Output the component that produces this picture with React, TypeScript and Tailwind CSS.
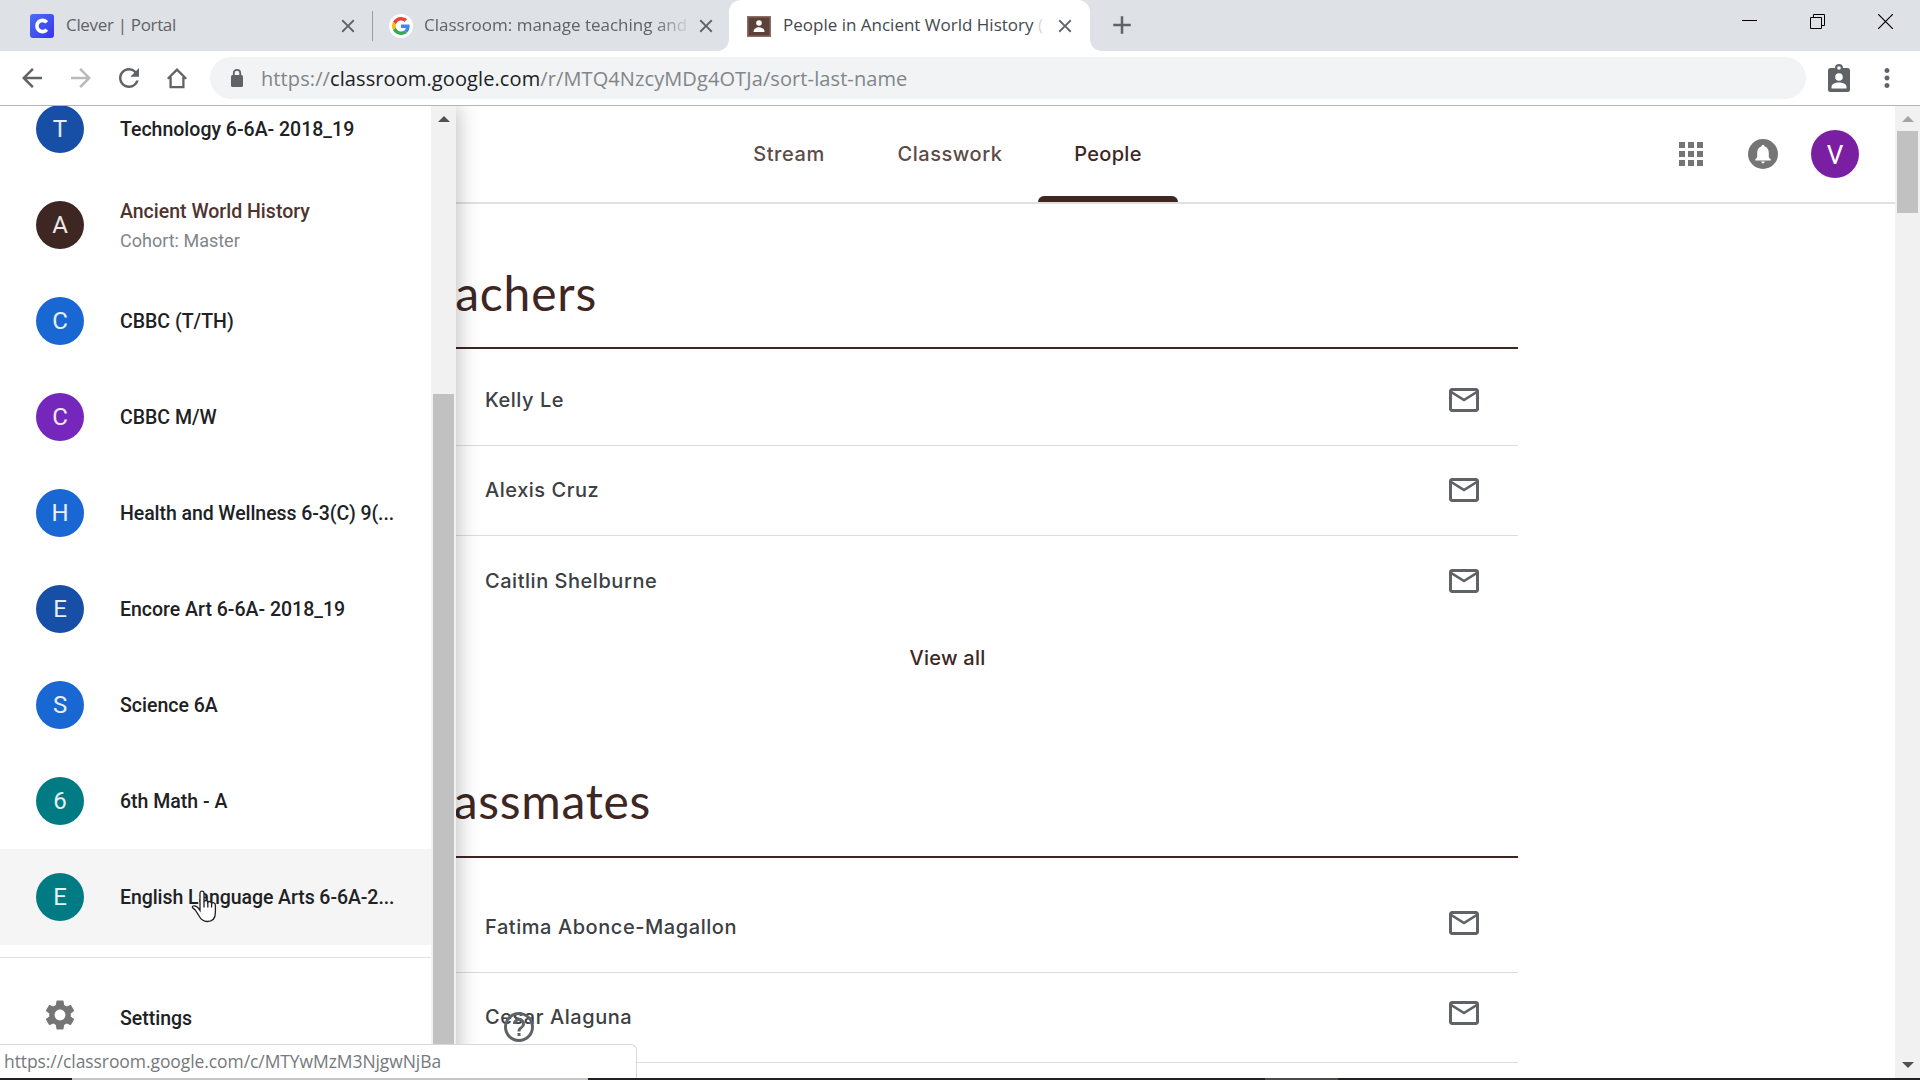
import { MdApps, MdArrowBack, MdArrowForward, MdClose, MdAdd, MdHelpOutline, MdMailOutline, MdMoreVert, MdRefresh, MdSettings } from "react-icons/md";

const courses = [
  { letter: "T", color: "bg-[#174ea6]", name: "Technology 6-6A- 2018_19" },
  { letter: "A", color: "bg-[#3e2723]", name: "Ancient World History", section: "Cohort: Master" },
  { letter: "C", color: "bg-[#1967d2]", name: "CBBC (T/TH)" },
  { letter: "C", color: "bg-[#7627bb]", name: "CBBC M/W" },
  { letter: "H", color: "bg-[#1967d2]", name: "Health and Wellness 6-3(C) 9(...", long: true },
  { letter: "E", color: "bg-[#174ea6]", name: "Encore Art 6-6A- 2018_19" },
  { letter: "S", color: "bg-[#1967d2]", name: "Science 6A" },
  { letter: "6", color: "bg-[#007b83]", name: "6th Math - A" },
  { letter: "E", color: "bg-[#007b83]", name: "English Language Arts 6-6A-2...", hovered: true, long: true },
];

const teachers = ["Kelly Le", "Alexis Cruz", "Caitlin Shelburne"];
const classmates = ["Fatima Abonce-Magallon", "Cesar Alaguna"];

function Flare({ flip = false }: { flip?: boolean }) {
  return (
    <svg className={flip ? "w-3 h-3 self-end -scale-x-100" : "w-3 h-3 self-end"} viewBox="0 0 12 12">
      <path d="M12 0v12H0C7 12 12 7 12 0z" fill="#fff" />
    </svg>
  );
}

function TabStrip() {
  return (
    <div className="flex h-[51px] shrink-0 bg-[#dee1e6] font-['Open_Sans',sans-serif] text-[17px] text-[#5f6368]">
      <div className="flex w-[372px] items-center pl-[30px] pr-[13px]">
        <div className="flex h-6 w-6 shrink-0 items-center justify-center rounded-[3px] bg-gradient-to-br from-[#4a6cf8] to-[#3d31ea]">
          <svg className="h-6 w-6" viewBox="0 0 24 24" fill="none" stroke="#fff" strokeWidth="3.6">
            <path d="M16.8 8.400A5.600 5.600 0 1 0 16.800 15.600" />
          </svg>
        </div>
        <span className="ml-[12px] grow whitespace-nowrap pb-[2px] tracking-[-0.33px]">Clever | Portal</span>
        <MdClose className="h-[22px] w-[22px]" />
      </div>
      <div className="my-auto h-[30px] w-px bg-[#9b9fa4]" />
      <div className="flex w-[344px] items-center pl-4 pr-0">
        <div className="flex h-6 w-6 shrink-0 items-center justify-center rounded-full bg-white">
          <svg className="h-[18px] w-[18px]" viewBox="0 0 48 48">
            <path fill="#EA4335" d="M24 9.5c3.54 0 6.71 1.22 9.21 3.6l6.85-6.85C35.9 2.38 30.47 0 24 0 14.62 0 6.51 5.38 2.56 13.22l7.98 6.19C12.43 13.72 17.74 9.5 24 9.5z" />
            <path fill="#4285F4" d="M46.98 24.55c0-1.57-.15-3.09-.38-4.55H24v9.02h12.94c-.58 2.96-2.26 5.48-4.78 7.18l7.73 6c4.51-4.18 7.09-10.36 7.09-17.65z" />
            <path fill="#FBBC05" d="M10.53 28.59c-.48-1.45-.76-2.99-.76-4.59s.27-3.14.76-4.59l-7.98-6.19C.92 16.46 0 20.12 0 24c0 3.88.92 7.54 2.56 10.78l7.97-6.19z" />
            <path fill="#34A853" d="M24 48c6.48 0 11.93-2.13 15.89-5.81l-7.73-6c-2.15 1.45-4.92 2.3-8.16 2.3-6.26 0-11.57-4.22-13.47-9.91l-7.98 6.19C6.51 42.62 14.62 48 24 48z" />
          </svg>
        </div>
        <span className="ml-[11px] w-[271px] shrink-0 overflow-hidden whitespace-nowrap pb-[2px] [mask-image:linear-gradient(90deg,#000_230px,transparent_268px)]">
          Classroom: manage teaching and
        </span>
        <MdClose className="h-[22px] w-[22px] shrink-0" />
      </div>
      <Flare />
      <div className="flex w-[361px] items-center rounded-t-[12px] bg-white pl-[18px] pr-[14px] text-[#45494d]">
        <svg className="h-6 w-6 shrink-0" viewBox="0 0 24 24">
          <rect y="2" width="24" height="21" fill="#8d6e63" />
          <rect x="1.5" y="3.5" width="21" height="18" fill="#5d4037" />
          <circle cx="12" cy="9" r="2.8" fill="#fff" />
          <path d="M6.500 18c0-3.300 2.700-4.800 5.500-4.800s5.500 1.500 5.500 4.800z" fill="#fff" />
        </svg>
        <span className="ml-3 grow whitespace-nowrap pb-[2px]">
          People in Ancient World History <span className="text-[#45494d]/25">(</span>
        </span>
        <MdClose className="h-[22px] w-[22px] shrink-0 text-[#5f6368]" />
      </div>
      <Flare flip />
      <MdAdd className="mt-[10px] ml-[5px] h-[30px] w-[30px]" />
      <div className="ml-auto flex gap-[53px] pt-[14px] pr-[27px] text-black">
        <svg className="h-[15px] w-[15px]" viewBox="0 0 15 15"><path d="M0 6.500H15" stroke="#000" /></svg>
        <svg className="h-[15px] w-[15px]" viewBox="0 0 15 15" fill="none" stroke="#000"><path d="M.5 3.500h11v11H.5zM3.500 3.500v-3h11v11h-3" /></svg>
        <svg className="h-[15px] w-[15px]" viewBox="0 0 15 15" fill="none" stroke="#000" strokeWidth="1.2"><path d="M0 0 15 15M15 0 0 15" /></svg>
      </div>
    </div>
  );
}

function Toolbar() {
  return (
    <div className="flex h-[55px] shrink-0 items-center border-b border-[#b3b5b8] bg-white pl-[17px] text-[#5f6368]">
      <MdArrowBack className="h-[30px] w-[30px] shrink-0" />
      <MdArrowForward className="ml-[19px] h-[30px] w-[30px] shrink-0 text-[#bababc]" />
      <MdRefresh className="ml-[18px] h-[30px] w-[30px] shrink-0" />
      <svg className="ml-[21px] h-6 w-6 shrink-0" viewBox="0 0 24 24" fill="none" stroke="currentColor" strokeWidth="2.3">
        <path d="M2.800 12.800 12 3.700l9.200 9.100M5.600 11v10.200h12.800V11" />
      </svg>
      <div className="ml-[21px] flex h-[42px] w-[1596px] shrink-0 items-center rounded-full bg-[#f1f3f4] pl-[21px]">
        <svg className="h-5 w-3 shrink-0" viewBox="0 0 12 20">
          <rect y="7" width="12" height="12" rx="1.500" fill="#5f6368" />
          <path d="M2.800 8V5a3.200 3.200 0 0 1 6.400 0v3" fill="none" stroke="#5f6368" strokeWidth="1.800" />
        </svg>
        <span className="ml-[18px] whitespace-nowrap pt-px font-['Open_Sans',sans-serif] text-[20px] tracking-[0.1px] text-[#80868b]">
          https://<span className="text-[#202124]">classroom.google.com</span>/r/MTQ4NzcyMDg4OTJa/sort-last-name
        </span>
      </div>
      <svg className="ml-[21px] h-[30px] w-6 shrink-0" viewBox="0 0 24 30">
        <rect x="1" y="5" width="22" height="24" rx="2.500" fill="#5f6368" />
        <circle cx="12" cy="5" r="4" fill="#5f6368" />
        <circle cx="12" cy="5" r="1.800" fill="#fff" />
        <circle cx="12" cy="14" r="3.800" fill="#fff" />
        <path d="M4.500 25.500v-1.500c0-3.500 4.500-4.500 7.500-4.500s7.500 1 7.500 4.500v1.500z" fill="#fff" />
      </svg>
      <MdMoreVert className="ml-[21px] h-[30px] w-[30px] shrink-0" />
    </div>
  );
}

function Drawer() {
  return (
    <aside className="absolute top-0 left-0 z-20 flex h-[974px] w-[456px] overflow-hidden bg-white shadow-[0_0_22px_rgba(0,0,0,0.3)]">
      <div className="-mt-[25px] w-[431px] shrink-0 font-['Roboto',sans-serif]">
        {courses.map((c) => (
          <div key={c.name} className={c.hovered ? "flex h-24 items-center bg-[#f5f5f5] pl-9" : "flex h-24 items-center pl-9"}>
            <div className={`flex h-12 w-12 shrink-0 items-center justify-center rounded-full text-[24px] text-white/90 ${c.color}`}>{c.letter}</div>
            <div className={c.long ? "ml-9 whitespace-nowrap pt-[2px] tracking-[-0.07px]" : "ml-9 whitespace-nowrap pt-[2px]"}>
              <div className={c.section ? "text-[19.5px] leading-[29px] font-medium text-[#4e342e]" : "text-[19.5px] leading-[30px] font-medium text-[#202124]"}>{c.name}</div>
              {c.section && <div className="text-[18px] leading-[29px] text-[#80868b]">{c.section}</div>}
            </div>
          </div>
        ))}
        <div className="mt-3 border-t border-[#e0e0e0]" />
        <div className="flex h-[114px] items-center pl-[42px]">
          <MdSettings className="h-9 w-9 text-[#757575]" />
          <span className="ml-[42px] pt-[7px] text-[19.5px] font-medium text-[#202124]">Settings</span>
        </div>
      </div>
      <div className="flex w-[25px] flex-col items-center bg-[#f1f1f1]">
        <svg className="mt-[10px] h-[6px] w-3" viewBox="0 0 12 6"><path d="M6 0l6 6H0z" fill="#505050" /></svg>
        <div className="mt-[272px] w-[21px] grow bg-[#c1c1c1]" />
      </div>
    </aside>
  );
}

function TopNav() {
  return (
    <header className="flex h-[98px] shrink-0 border-b-2 border-[#e0e0e0] pl-[716px] font-['Inter',sans-serif] text-[20px] font-medium text-[#5d4b48]">
      <div className="flex w-[146px] items-center justify-center tracking-[0.6px]">Stream</div>
      <div className="flex w-[176px] items-center justify-center tracking-[0.55px]">Classwork</div>
      <div className="flex w-[140px] flex-col items-center text-[#3e2723]">
        <span className="flex h-[90px] items-center pt-[6px] tracking-[0.3px]">People</span>
        <div className="h-[6px] w-full rounded-t-[6px] bg-[#3e2723]" />
      </div>
      <div className="ml-auto flex items-center pr-9">
        <MdApps className="h-9 w-9 text-[#757575]" />
        <svg className="ml-[39px] h-[30px] w-[30px]" viewBox="0 0 30 30">
          <circle cx="15" cy="15" r="15" fill="#757575" />
          <path d="M15 5.800a1.600 1.600 0 0 1 1.600 1.700c2.700.8 4.200 3 4.200 6v4.700l2 2.300v1H7.200v-1l2-2.300v-4.700c0-3 1.500-5.200 4.200-6A1.600 1.600 0 0 1 15 5.800zM13.200 22.600h3.600a1.800 1.800 0 0 1-3.600 0z" fill="#fff" />
        </svg>
        <div className="ml-[33px] flex h-12 w-12 items-center justify-center rounded-full bg-[#7b1fa2] pt-[2px] font-['Roboto',sans-serif] text-[26px] font-normal text-white">V</div>
      </div>
    </header>
  );
}

function Person({ name, last = false, shift = false }: { name: string; last?: boolean; shift?: boolean }) {
  const border = last ? "" : "border-b border-[#dadce0]";
  const pad = shift ? "pb-[9px]" : "pb-px";
  return (
    <div className={`flex h-[90px] items-center pl-[108px] pr-9 ${border} ${pad}`}>
      <span className={shift ? "grow pt-[8px] tracking-[0.56px]" : "grow tracking-[0.53px]"}>{name}</span>
      <MdMailOutline className="h-9 w-9 text-[#5f6368]" />
    </div>
  );
}

function Roster() {
  return (
    <main className="ml-[377px] w-[1141px] font-['Inter',sans-serif] text-[20px] font-[450] text-[#3c4043]">
      <section className="h-[502px]">
        <h2 className="flex h-[143px] w-[220px] items-end justify-end pb-[24px] font-['Lato',sans-serif] text-[48px] leading-[60px] font-normal tracking-[0.8px] text-[#3e2723]">Teachers</h2>
        <div className="border-t-2 border-[#3e2723] pt-[7px]">
          {teachers.map((t, i) => <Person key={t} name={t} last={i === 2} />)}
        </div>
        <div className="pt-[15px] text-center leading-[34px] font-medium tracking-[0.25px] text-[#3e2723]">View all</div>
      </section>
      <section>
        <h2 className="flex h-[150px] w-[274px] items-end justify-end pb-[25px] font-['Lato',sans-serif] text-[48px] leading-[60px] font-normal tracking-[0.7px] text-[#3e2723]">Classmates</h2>
        <div className="border-t-2 border-[#3e2723] pt-[25px]">
          {classmates.map((t) => <Person key={t} name={t} shift />)}
        </div>
      </section>
    </main>
  );
}

export default function App() {
  return (
    <div className="relative flex h-[1080px] w-[1920px] flex-col overflow-hidden bg-white">
      <TabStrip />
      <Toolbar />
      <div className="relative flex h-[972px] shrink-0 overflow-hidden">
        <div className="flex w-[1895px] flex-col">
          <TopNav />
          <Roster />
        </div>
        <div className="flex w-[25px] flex-col items-center bg-[#f1f1f1]">
          <svg className="mt-[10px] h-[6px] w-3" viewBox="0 0 12 6"><path d="M6 0l6 6H0z" fill="#a3a3a3" /></svg>
          <div className="mt-[9px] h-[82px] w-[21px] bg-[#c1c1c1]" />
          <svg className="mt-auto mb-[10px] h-[6px] w-3" viewBox="0 0 12 6"><path d="M0 0h12L6 6z" fill="#505050" /></svg>
        </div>
        <Drawer />
        <MdHelpOutline className="absolute top-[903px] left-[501px] z-20 h-9 w-9 text-[#5f6368]" />
        <div className="absolute bottom-0 left-0 z-30 flex h-[34px] w-[637px] items-center rounded-tr-[6px] border-t border-r border-[#d5d7da] bg-white pl-1 font-['Open_Sans',sans-serif] text-[17.5px] tracking-[-0.08px] text-[#75797d]">
          https://classroom.google.com/c/MTYwMzM3NjgwNjBa
        </div>
        <svg className="absolute top-[784px] left-[191px] z-30 h-[34px] w-[27px]" viewBox="0 0 27 34">
          <path d="M9 20.500V3.200C9 .4 13 .4 13 3.200v8.300c.8-1.500 3.600-1.200 3.800.8.900-1.300 3.500-1 3.800 1 1-1.100 3.800-.8 3.800 1.900v7.300c0 5.500-3 9-8.300 9-4.200 0-6.300-2.300-8.200-5.800L4.600 20.500c-.8-1.300-2-1.800-3-2.700-.8-1 .5-2.300 2.200-1.900C6 16.400 7.500 18 9 20.500z" fill="#fff" stroke="#202124" strokeWidth="1.300" />
          <path d="M13 11v6.500M16.800 12v5.500M20.600 13v4.500" stroke="#202124" strokeWidth="1.300" />
        </svg>
      </div>
      <div className="flex h-[2px] shrink-0 bg-[#202124]">
        <div className="ml-[72px] h-full w-[516px] bg-[#c4c5c6]" />
        <div className="ml-[677px] h-full w-[73px] bg-[#4a4b4d]" />
      </div>
    </div>
  );
}
